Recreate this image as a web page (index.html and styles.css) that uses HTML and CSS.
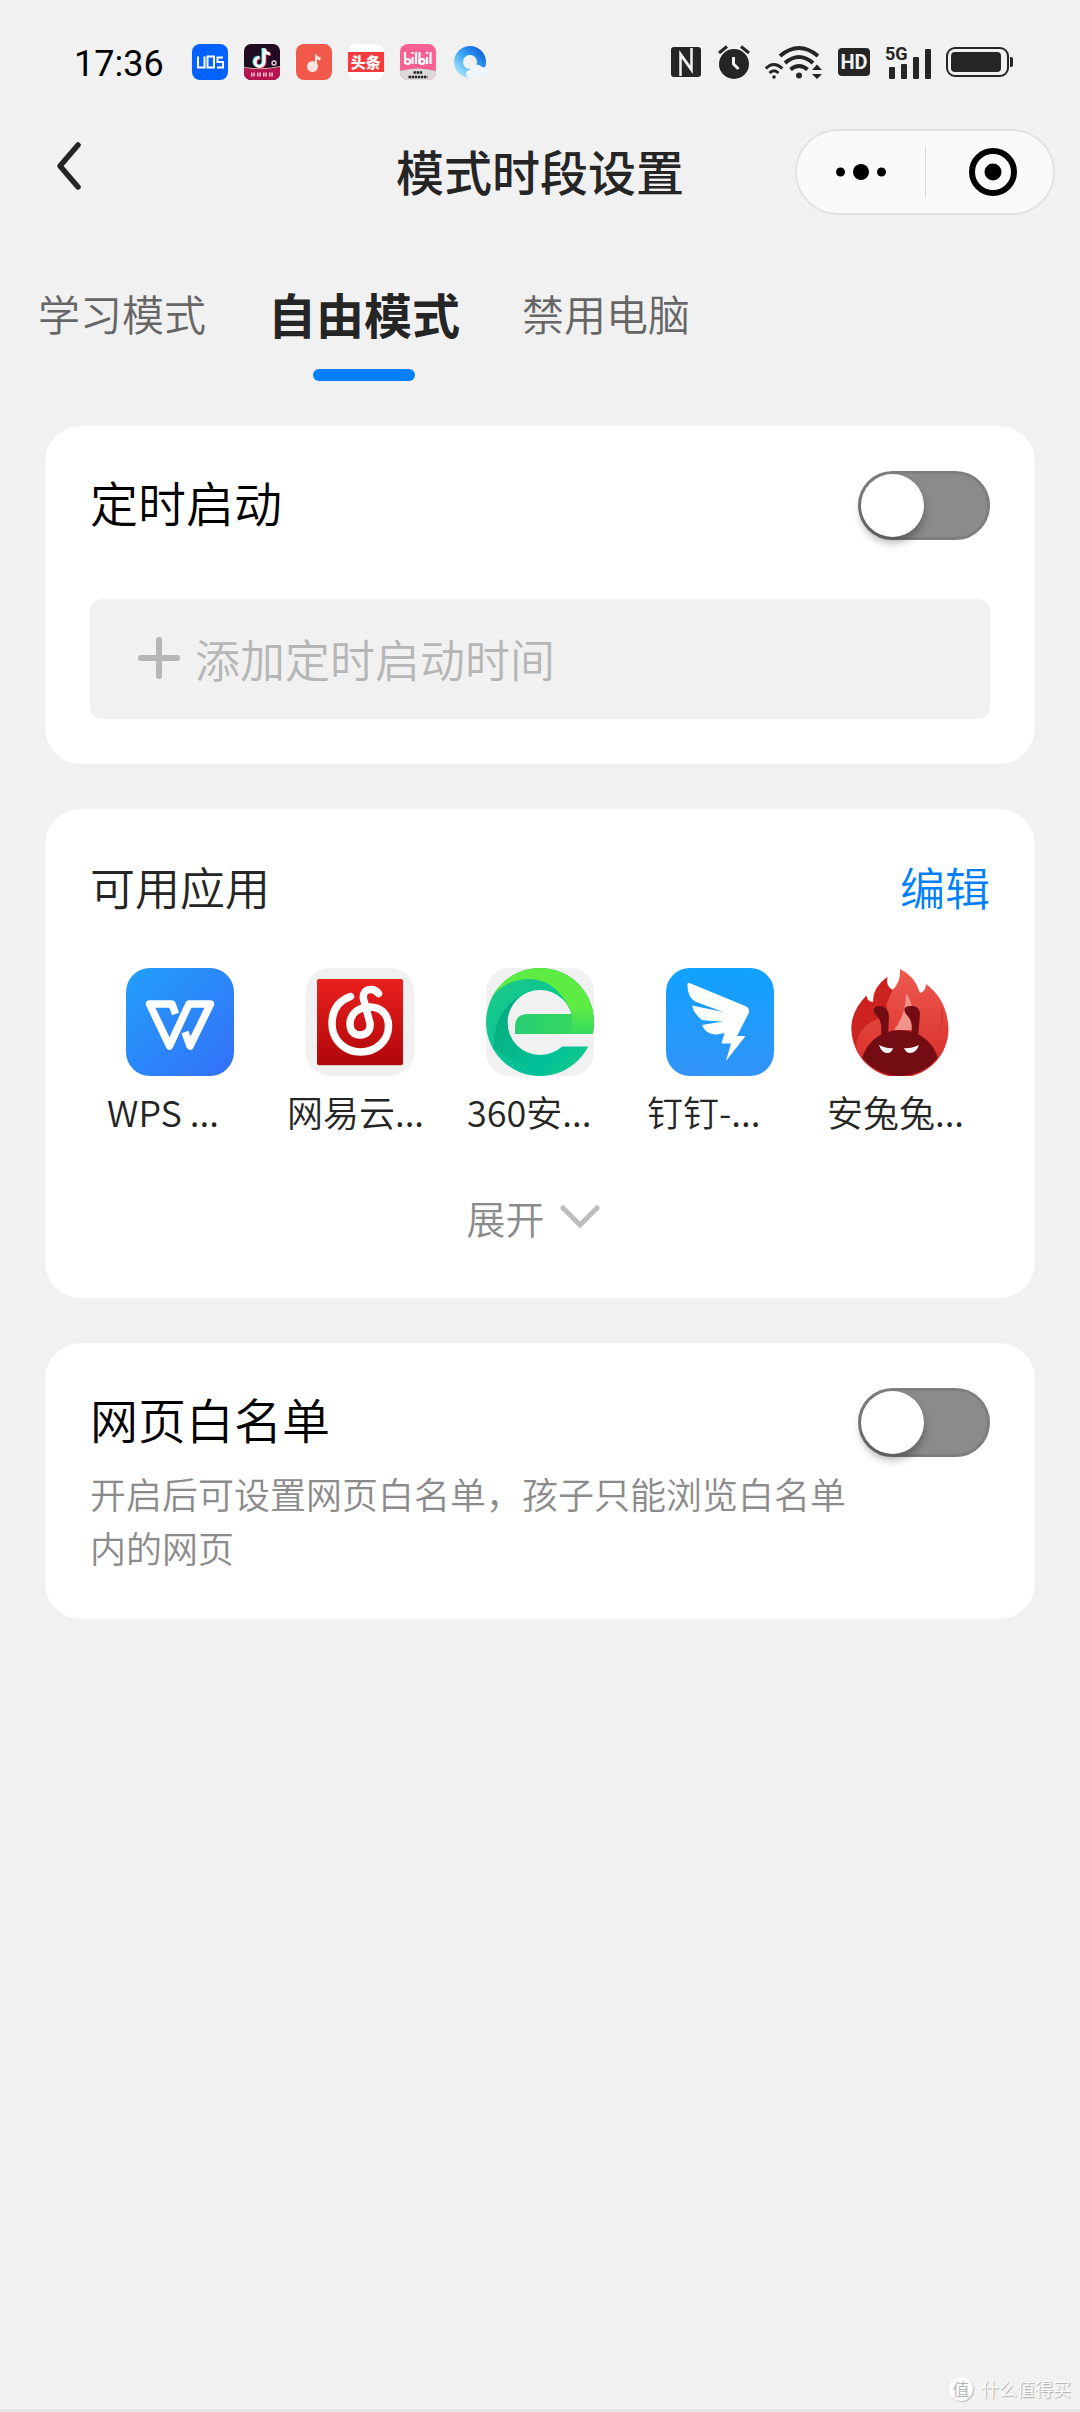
FILE: index.html
```html
<!DOCTYPE html>
<html lang="zh-CN">
<head>
<meta charset="utf-8">
<meta name="viewport" content="width=device-width, initial-scale=1">
<title>模式时段设置</title>
<link rel="stylesheet" href="styles.css">
</head>
<body>
<div class="page">
  <div class="status">
    <time class="clock">17:36</time>
    <div class="notices">
      <svg width="36" height="36" viewBox="0 0 36 36" aria-hidden="true">
        <rect width="36" height="36" rx="8" fill="#0262ff"/>
        <path d="M6 12.500v11h6.500v-11M15.500 12.500h6.500v11h-6.500zM31 13.500h-5.500V18H31v5.500h-6" fill="none" stroke="#fff" stroke-width="2"/>
      </svg>
      <svg width="36" height="36" viewBox="0 0 36 36" aria-hidden="true">
        <rect width="36" height="36" rx="7" fill="#220c22"/>
        <path d="M0 24q18 3 36-1v6a7 7 0 0 1-7 7H7a7 7 0 0 1-7-7z" fill="#b5144f"/>
        <path d="M0 23.500q18 3 36-1" fill="none" stroke="#e8a9a8" stroke-width="1"/>
        <g fill="none" stroke-width="3.200">
          <path d="M19 4v13.500a4.500 4.500 0 1 1-4.500-4.500M19 4q1 5 6 5.500" stroke="#25e8e0"/>
          <path d="M21 5v13.500a4.500 4.500 0 1 1-4.500-4.500M21 5q1 5 6 5.500" stroke="#f3285b"/>
          <path d="M20 4.500V18a4.500 4.500 0 1 1-4.500-4.500M20 4.500q1 5 6 5.500" stroke="#fff"/>
        </g>
        <circle cx="30" cy="19" r="2" fill="none" stroke="#e7cfd5" stroke-width="1.400"/>
        <path d="M7 30.500h4m2 0h4m2 0h4m2 0h4" stroke="#f2c3cf" stroke-width="4" stroke-dasharray="1.500 .8"/>
      </svg>
      <svg width="36" height="36" viewBox="0 0 36 36" aria-hidden="true">
        <rect width="36" height="36" rx="8" fill="#f15a4a"/>
        <circle cx="16.500" cy="22.500" r="5.500" fill="#fde3df"/>
        <path d="M19 23V9q1.500 3.500 6 4.500l-1 3q-2-.5-3-1.500V23z" fill="#fde3df"/>
      </svg>
      <span class="toutiao"><span class="toutiao-band">头条</span></span>
      <svg width="36" height="36" viewBox="0 0 36 36" aria-hidden="true">
        <rect width="36" height="36" rx="8" fill="#fc5f92"/>
        <path d="M0 27q18-5 36 0v1a8 8 0 0 1-8 8H8a8 8 0 0 1-8-8z" fill="#d9d9dc"/>
        <g fill="none" stroke="#fff" stroke-width="2.200">
          <path d="M5 8v12M19.500 8v12"/>
          <circle cx="7.500" cy="17.500" r="2.500"/><circle cx="22" cy="17.500" r="2.500"/>
          <path d="M12.500 13v7m0-10V8M16 8v12M27 13v7m0-10V8M30.500 8v12"/>
        </g>
        <path d="M13.500 28.500h9M8.500 33h19" stroke="#222" stroke-width="2.600" stroke-dasharray="2.400 .7"/>
      </svg>
      <svg width="36" height="36" viewBox="0 0 36 36" aria-hidden="true">
        <defs><linearGradient id="cloudRing" x1="0" y1="1" x2="1" y2="0"><stop offset="0" stop-color="#a9e2fb"/><stop offset=".5" stop-color="#3aa6f8"/><stop offset="1" stop-color="#1263da"/></linearGradient></defs>
        <circle cx="18" cy="18" r="11.500" fill="none" stroke="url(#cloudRing)" stroke-width="9"/>
        <path d="M18 34a4 4 0 0 1 0-8 7 7 0 0 1 12-3 5.500 5.500 0 0 1 1 11z" fill="#eef5fc"/>
      </svg>
    </div>
    <div class="signals">
      <svg width="30" height="30" viewBox="0 0 30 30" aria-label="NFC">
        <rect width="30" height="30" rx="3" fill="#252525"/>
        <path d="M9.500 29V7l10 14M20.500 1v22l-10-14" fill="none" stroke="#f1f1f1" stroke-width="2.500"/>
      </svg>
      <svg width="34" height="34" viewBox="0 0 34 34" aria-label="闹钟">
        <circle cx="18" cy="19" r="15" fill="#252525"/>
        <path d="M3 8l8-6.500M33 8l-8-6.500" stroke="#252525" stroke-width="3"/>
        <path d="M17.500 12v7l5 5" fill="none" stroke="#f1f1f1" stroke-width="3"/>
      </svg>
      <svg width="58" height="34" viewBox="0 0 58 34" aria-label="无线网络">
        <g fill="none" stroke="#252525">
          <path d="M15 11q19-16 38 0" stroke-width="4"/>
          <path d="M20 18q14-12 28 0" stroke-width="4"/>
          <path d="M25.500 24.500q8.500-7 17 0" stroke-width="4"/>
          <path d="M.8 23.500q8-8 16.500 0" stroke-width="3"/>
          <path d="M4.500 28q4.500-4.500 9 0" stroke-width="3"/>
        </g>
        <circle cx="34" cy="30.500" r="3" fill="#252525"/><circle cx="9" cy="32" r="1.800" fill="#252525"/>
        <path d="M47 25l5-5.500 5 5.500zM47 29l5 5 5-5z" fill="#252525"/>
      </svg>
      <span class="hd">HD</span>
      <span class="cell">
        <span class="cell-label">5G</span>
        <svg width="46" height="33" viewBox="0 0 46 33" aria-hidden="true">
          <g fill="#252525"><rect x="4" y="21" width="6" height="12" rx="1"/><rect x="16" y="18" width="6" height="15" rx="1"/><rect x="28" y="11" width="6" height="22" rx="1"/><rect x="40" y="3" width="6" height="30" rx="1"/></g>
        </svg>
      </span>
      <svg width="67" height="30" viewBox="0 0 67 30" aria-label="电量">
        <rect x="1" y="1" width="61" height="28" rx="8" fill="none" stroke="#252525" stroke-width="2"/>
        <rect x="5" y="5" width="50" height="20" rx="4" fill="#252525"/>
        <path d="M64 10h1q2 0 2 2v6q0 2-2 2h-1z" fill="#252525"/>
      </svg>
    </div>
  </div>

  <header class="nav">
    <button class="back" type="button" aria-label="返回">
      <svg width="28" height="50" viewBox="0 0 28 50"><path d="M24 4L6 25l18 21" fill="none" stroke="#252525" stroke-width="5.500" stroke-linecap="round" stroke-linejoin="round"/></svg>
    </button>
    <h1 class="title">模式时段设置</h1>
    <div class="capsule">
      <button class="capsule-btn" type="button" aria-label="更多">
        <svg width="50" height="50" viewBox="0 0 50 50"><circle cx="4.500" cy="25" r="4.500"/><circle cx="25" cy="25" r="8"/><circle cx="45.500" cy="25" r="4.500"/></svg>
      </button>
      <button class="capsule-btn capsule-close" type="button" aria-label="关闭">
        <svg width="50" height="50" viewBox="0 0 50 50"><circle cx="25" cy="25" r="21" fill="none" stroke="#000" stroke-width="6"/><circle cx="25" cy="25" r="8.500"/></svg>
      </button>
    </div>
  </header>

  <nav class="tabs">
    <a class="tab" href="#study">学习模式</a>
    <a class="tab tab-active" href="#free" aria-current="page">自由模式</a>
    <a class="tab" href="#block">禁用电脑</a>
  </nav>

  <main class="cards">
    <section class="card">
      <div class="row">
        <label class="name" for="timer">定时启动</label>
        <input class="switch" id="timer" type="checkbox" role="switch">
      </div>
      <button class="add" type="button">
        <svg width="42" height="42" viewBox="0 0 42 42" aria-hidden="true"><path d="M21 3v36M3 21h36" stroke="#b6b6b6" stroke-width="6" stroke-linecap="round"/></svg>
        添加定时启动时间
      </button>
    </section>

    <section class="card apps-card">
      <div class="row">
        <h2 class="heading">可用应用</h2>
        <a class="edit" href="#edit">编辑</a>
      </div>
      <ul class="apps">
        <li class="app">
          <svg class="app-icon" viewBox="0 0 108 108" aria-hidden="true">
            <defs><linearGradient id="wps" x1="0" y1="0" x2="1" y2="1"><stop offset="0" stop-color="#229ffb"/><stop offset="1" stop-color="#3470f8"/></linearGradient></defs>
            <rect width="108" height="108" rx="24" fill="url(#wps)"/>
            <path d="M49.500 46L46 36H23.500L43.500 78 63 36h21.500L64 78l-5-14" fill="none" stroke="#fff" stroke-width="7.500" stroke-linejoin="round"/>
          </svg>
          <span class="app-name">WPS ...</span>
        </li>
        <li class="app">
          <svg class="app-icon" viewBox="0 0 108 108" aria-hidden="true">
            <defs><linearGradient id="music" x1="0" y1="0" x2="0" y2="1"><stop offset="0" stop-color="#eb201f"/><stop offset="1" stop-color="#b00709"/></linearGradient></defs>
            <rect width="108" height="108" rx="24" fill="#f1f1f1"/>
            <rect x="11" y="12" width="86" height="86" rx="2" fill="#e3c4c4"/>
            <rect x="11" y="11" width="86" height="86" rx="2" fill="url(#music)"/>
            <path d="M44.500 28.500C32 33 26 43 26 56c0 16 13 28 28.500 28S82.500 73 82.500 58c0-12-8-19-18.500-19-12 0-20 7-20 17 0 7 4 11 10 11 7 0 11-5 10-12L57.500 31c-1-6 2-9.500 7.500-9.500q4.500 0 7.500 4" fill="none" stroke="#fff" stroke-width="7.500" stroke-linecap="round"/>
          </svg>
          <span class="app-name">网易云...</span>
        </li>
        <li class="app">
          <svg class="app-icon" viewBox="0 0 108 108" aria-hidden="true">
            <defs>
              <linearGradient id="ring" x1="0" y1="0" x2="1" y2="1"><stop offset="0" stop-color="#1fcb84"/><stop offset=".7" stop-color="#00c09a"/><stop offset="1" stop-color="#20d080"/></linearGradient>
              <linearGradient id="bar" x1="0" y1="0" x2="1" y2="0"><stop offset="0" stop-color="#27cd73"/><stop offset="1" stop-color="#36d860"/></linearGradient>
              <linearGradient id="lime" x1="0" y1="0" x2="0" y2="1"><stop offset="0" stop-color="#5eec42"/><stop offset=".6" stop-color="#5eec42"/><stop offset="1" stop-color="#34da62"/></linearGradient>
              <linearGradient id="shade" x1="0" y1="0" x2="1" y2="1"><stop offset="0" stop-color="#00a67c"/><stop offset=".7" stop-color="#00a67c" stop-opacity="0"/></linearGradient>
              <clipPath id="donut"><path clip-rule="evenodd" d="M54 0a54 54 0 1 1 0 108A54 54 0 1 1 54 0zM54 22a32.500 32.500 0 1 0 0 65 32.500 32.500 0 1 0 0-65z"/></clipPath>
            </defs>
            <rect width="108" height="108" rx="24" fill="#f1f1f1"/>
            <g clip-path="url(#donut)">
              <rect width="108" height="108" fill="url(#ring)"/>
              <path d="M0 36Q16 11 43 11q28 0 43 35v20h22V0H0z" fill="url(#lime)"/>
              <path d="M32 29Q6 47 8 81l46 27 40-20-40-1z" fill="url(#shade)"/>
            </g>
            <path d="M81 66h27v12.500H76l-6 4z" fill="#f1f1f1"/>
            <path d="M29 66v-7q0-13 13-13h44v20z" fill="url(#bar)"/>
          </svg>
          <span class="app-name">360安...</span>
        </li>
        <li class="app">
          <svg class="app-icon" viewBox="0 0 108 108" aria-hidden="true">
            <defs><linearGradient id="ding" x1="0" y1="0" x2="0" y2="1"><stop offset="0" stop-color="#10a2ff"/><stop offset="1" stop-color="#3293f8"/></linearGradient></defs>
            <rect width="108" height="108" rx="24" fill="url(#ding)"/>
            <path d="M21.500 16q0-1.500 2-1L78 37.500q6 2 5 7L71 68h8.500L60 93l5-17.500h-9.500L58.500 65Q41 70 36 57l21-3.500Q46 53 36 52 28 46 26 37.500l31 6.500-28-10.500Q21 28 21.500 16z" fill="#fff"/>
          </svg>
          <span class="app-name">钉钉-...</span>
        </li>
        <li class="app">
          <svg class="app-icon" viewBox="0 0 108 108" aria-hidden="true">
            <defs>
              <linearGradient id="fire" x1="0" y1="0" x2="0" y2="1"><stop offset="0" stop-color="#ee5a50"/><stop offset="1" stop-color="#d62a25"/></linearGradient>
              <clipPath id="disc"><circle cx="54" cy="59.500" r="48.500"/></clipPath>
            </defs>
            <path d="M20 28Q5 44 5.500 61a48.500 48.500 0 0 0 97 0q-1-29-22.500-45 0 7-6 9Q69 8 54 1q1 14-8 21-7-4-5-13-15 11-14 25-6 0-7-6z" fill="url(#fire)"/>
            <path d="M20 28Q5 44 5.500 61q1 12 5 18-1-20 18-26 14-8 12-17l6-14q-7-4-5-13-15 11-14 25-6 0-7-6z" fill="#cd231f"/>
            <path d="M94 35q4 14-1 28 8-12 1-28zM31 28q12 5 9 15Q37 34 31 28zM11 72q-1-14 14-18-10 7-14 18z" fill="#b9231f" opacity=".45"/>
            <path d="M60 25q8 11 6 24v13H48q12-15 12-37z" fill="#f0938d"/>
            <g clip-path="url(#disc)"><ellipse cx="54" cy="99" rx="39" ry="37" fill="#730d13"/></g>
            <path d="M35 66Q37 53 29 46q-4-8 5-8 8 0 9 10l-1 20zM65 66q3-12-5-20-5-8 5-8 8-1 9 8l-2 24z" fill="#730d13"/>
            <path d="M33 77q9 4 14 3-1 5-6 5-5 0-8-8zM73 77q-9 4-15 3 2 5 6 5 6 0 9-8z" fill="#fff"/>
          </svg>
          <span class="app-name">安兔兔...</span>
        </li>
      </ul>
      <button class="expand" type="button">
        展开
        <svg width="40" height="24" viewBox="0 0 40 24" aria-hidden="true"><path d="M3 3l17 17L37 3" fill="none" stroke="#bdbdbd" stroke-width="5" stroke-linecap="round"/></svg>
      </button>
    </section>

    <section class="card">
      <div class="row">
        <label class="name" for="whitelist">网页白名单</label>
        <input class="switch" id="whitelist" type="checkbox" role="switch" aria-describedby="whitelist-note">
      </div>
      <p class="note" id="whitelist-note">开启后可设置网页白名单，孩子只能浏览白名单内的网页</p>
    </section>
  </main>

  <footer class="mark"><span class="mark-badge">值</span>什么值得买</footer>
</div>
</body>
</html>
```
FILE: styles.css
```css
* {
  box-sizing: border-box;
}

body {
  margin: 0;
  background: #f1f1f1;
  color: #252525;
  font-family: "Noto Sans CJK SC", sans-serif;
  font-weight: 350;
}

button {
  padding: 0;
  border: 0;
  background: none;
  color: inherit;
  font: inherit;
  cursor: pointer;
}

a {
  color: inherit;
  text-decoration: none;
}

svg {
  display: block;
  flex: none;
}

.page {
  display: flex;
  flex-direction: column;
  min-height: 100vh;
  border-bottom: 3px solid #e4e4e4;
}

/* Status bar */
.status {
  display: flex;
  align-items: center;
  height: 124px;
  padding: 0 67px 0 74px;
}

.clock {
  padding-top: 3px;
  color: #000;
  font: 36px/40px Roboto, sans-serif;
}

.notices {
  display: flex;
  gap: 16px;
  margin-left: 28px;
}

.toutiao {
  display: flex;
  align-items: center;
  width: 36px;
  height: 36px;
  border-radius: 8px;
  background: #fff;
}

.toutiao-band {
  width: 36px;
  background: #f63a3e;
  color: #fff;
  font-size: 15px;
  font-weight: 900;
  line-height: 20px;
  text-align: center;
}

.signals {
  display: flex;
  align-items: center;
  gap: 15px;
  margin-left: auto;
}

.hd {
  width: 32px;
  border-radius: 4px;
  background: #252525;
  color: #f1f1f1;
  font: 700 20px/28px Roboto, sans-serif;
  text-align: center;
}

.cell {
  position: relative;
}

.cell-label {
  position: absolute;
  top: 0;
  left: 0;
  background: #f1f1f1;
  font: 700 18px/16px Roboto, sans-serif;
}

/* Title bar */
.nav {
  display: grid;
  grid-template-columns: 260px 1fr 260px;
  align-items: center;
  margin-top: 5px;
  padding: 0 25px;
}

.back {
  justify-self: start;
  margin: 0 0 12px 29px;
}

.title {
  margin: 0;
  padding-bottom: 4px;
  font-size: 48px;
  font-weight: 500;
  line-height: 68px;
  text-align: center;
}

.capsule {
  display: grid;
  grid-template-columns: 1fr 1fr;
  height: 86px;
  padding: 15px 0;
  border: 2px solid #e2e2e2;
  border-radius: 43px;
  background: #fafafa;
}

.capsule-btn {
  display: grid;
  place-items: center;
}

.capsule-close {
  padding-left: 6px;
  border-left: 1px solid #dcdcdc;
}

/* Mode tabs */
.tabs {
  display: flex;
  gap: 62px;
  height: 121px;
  margin: 45px 0;
  padding: 20px 38px 0;
}

.tab {
  color: #666;
  font-size: 42px;
  line-height: 66px;
}

.tab-active {
  color: #252525;
  font-size: 48px;
  font-weight: 700;
}

.tab-active::after {
  display: block;
  width: 102px;
  height: 12px;
  margin: 23px auto 0;
  border-radius: 6px;
  background: #007fff;
  content: "";
}

/* Cards */
.cards {
  display: flex;
  flex-direction: column;
  gap: 45px;
  padding: 0 45px;
}

.card {
  padding: 45px;
  border-radius: 36px;
  background: #fff;
}

.row {
  display: flex;
  align-items: flex-start;
  justify-content: space-between;
}

.name {
  color: #000;
  font-size: 48px;
  line-height: 60px;
}

.switch {
  display: flex;
  flex: none;
  width: 132px;
  height: 69px;
  margin: 0;
  border: 3px solid #7e7e7e;
  border-radius: 35px;
  background: #8b8b8b;
  appearance: none;
  cursor: pointer;
}

.switch::before {
  width: 63px;
  height: 63px;
  border-radius: 50%;
  background: #fff;
  box-shadow: 0 6px 8px rgba(0, 0, 0, 0.3);
  content: "";
}

.switch:checked {
  justify-content: flex-end;
  border-color: #007fff;
  background: #007fff;
}

.add {
  display: flex;
  align-items: center;
  gap: 15px;
  width: 100%;
  height: 120px;
  margin-top: 59px;
  padding: 0 48px 2px;
  border-radius: 12px;
  background: #f1f1f1;
  color: #b6b6b6;
  font-size: 45px;
}

.apps-card {
  padding-bottom: 54px;
}

.heading {
  margin: 0;
  font-size: 45px;
  font-weight: inherit;
  line-height: 66px;
}

.edit {
  color: #007fff;
  font-size: 45px;
  line-height: 66px;
}

.apps {
  display: grid;
  grid-template-columns: repeat(5, minmax(0, 1fr));
  margin: 48px 0 0;
  padding: 0;
  list-style: none;
}

.app {
  display: flex;
  flex-direction: column;
  align-items: center;
  gap: 8px;
  padding: 0 17px;
}

.app-icon {
  width: 108px;
  height: 108px;
}

.app-name {
  width: 100%;
  font-size: 36px;
  line-height: 54px;
  white-space: nowrap;
}

.expand {
  display: flex;
  align-items: center;
  gap: 15px;
  margin: 52px auto 0;
  padding-right: 14px;
  color: #8b8b8b;
  font-size: 39px;
  line-height: 54px;
}

.note {
  margin: 9px 0 0;
  padding-right: 140px;
  color: #8b8b8b;
  font-size: 36px;
  line-height: 54px;
}

/* Site mark */
.mark {
  display: flex;
  align-items: center;
  justify-content: flex-end;
  gap: 8px;
  margin-top: auto;
  padding: 0 9px 7px;
  color: #fff;
  font-size: 18px;
  line-height: 27px;
  text-shadow: 1px 1px 1px #aaa;
}

.mark-badge {
  width: 24px;
  border-radius: 50%;
  background: #fff;
  box-shadow: 1px 1px 1px #bbb;
  color: #b5b5b5;
  font-size: 17px;
  line-height: 24px;
  text-align: center;
  text-shadow: none;
}
```
